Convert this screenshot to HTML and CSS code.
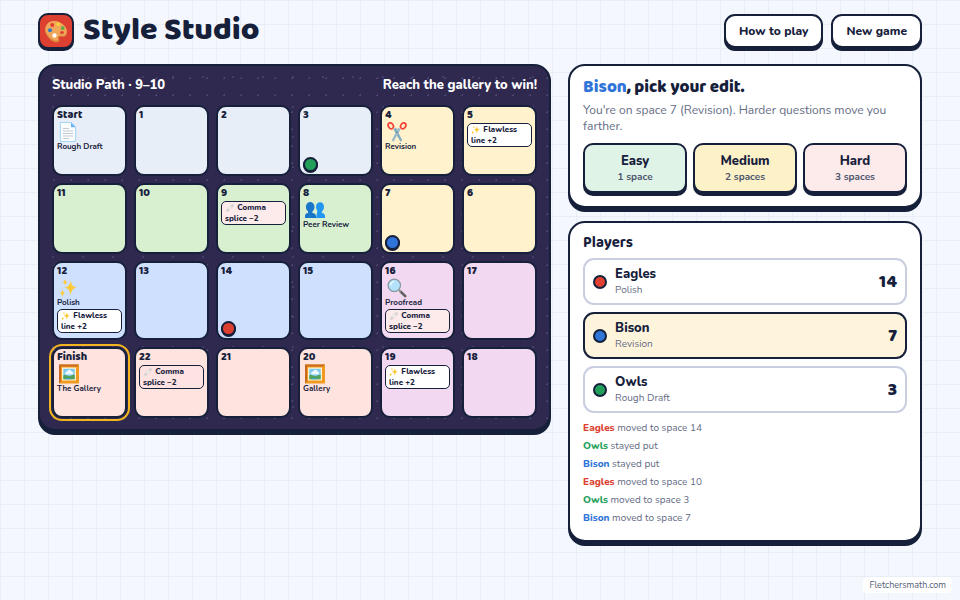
FILE: index.html
```html
<!DOCTYPE html>
<html lang="en">
<head>
<meta charset="utf-8">
<meta name="viewport" content="width=device-width, initial-scale=1">
<title>Style Studio</title>
<link rel="stylesheet" href="styles.css">
</head>
<body>
<svg class="sprite" aria-hidden="true">
  <symbol id="palette" viewBox="0 0 32 32">
    <path fill="#d98b3f" d="M4 8C9 0 22 2 28 10c4 6 3 11 0 13-3 2-6-1-8 1s2 4 0 6c-4 3-12-1-16-8C0 17 1 12 4 8z"/>
    <path fill="#f2a65a" d="M4 7C9 0 22 2 28 10c4 6 2 10-1 12-3 1-6-1-8 1s2 4-1 5c-4 2-10-2-14-8C1 15 1 11 4 7z"/>
    <ellipse cx="24" cy="18" rx="2.6" ry="2" fill="#dd4030"/>
    <circle cx="11" cy="8" r="2.6" fill="#e23b32"/>
    <circle cx="19" cy="7" r="2.6" fill="#f4d03c"/>
    <circle cx="25" cy="12" r="2.5" fill="#5fa845"/>
    <circle cx="8" cy="15" r="2.7" fill="#3279c8"/>
    <circle cx="14" cy="22" r="2.9" fill="#fff"/>
  </symbol>
  <symbol id="page" viewBox="0 0 20 20">
    <path fill="#fafcfe" stroke="#90caf5" stroke-width=".8" d="M1.400 .5h10.800l4.400 4.600v14.400H1.400z"/>
    <path fill="#64b5f6" d="M12 .5l4.600 4.800H12z"/>
    <path stroke="#b5bec6" stroke-width=".8" d="M4 6.500h6M4 9h10M4 11.500h10M4 14h10M4 16.500h6"/>
  </symbol>
  <symbol id="scissors" viewBox="0 0 20 20">
    <path fill="#82aec0" d="M6.200 7L9 5.800l6.200 12.400-1.700 1.600z"/>
    <path fill="#9dbccb" d="M13.800 7L11 5.800 4.800 18.200l1.700 1.600z"/>
    <circle cx="10" cy="10.200" r=".8" fill="#546e7a"/>
    <g fill="none" stroke="#f44336" stroke-width="1.700">
      <ellipse cx="3.800" cy="3.800" rx="2.400" ry="3.100" transform="rotate(-35 3.800 3.800)"/>
      <ellipse cx="16.200" cy="3.800" rx="2.400" ry="3.100" transform="rotate(35 16.200 3.800)"/>
    </g>
  </symbol>
  <symbol id="people" viewBox="0 0 20 20">
    <g fill="#2196f3"><ellipse cx="15" cy="7" rx="4" ry="4.800"/><path d="M12.600 10h4.200v3c2 .3 3.200 1.300 3.200 3V18h-9z"/></g>
    <g fill="#1976c9"><ellipse cx="5.200" cy="7" rx="4.300" ry="5"/><path d="M3 10h4.400v3c2.200.3 3.600 1.300 3.600 3V18H0v-2c0-1.700 1-2.700 3-3z"/></g>
  </symbol>
  <symbol id="sparkles" viewBox="0 0 20 20">
    <g fill="#fdca37">
      <path d="M11.600 2c.6 4.800 2 6.600 6.200 7.600-4.200 1.200-5.600 3-6.200 8.200-.6-5.200-2-7-6-8.200 4-1 5.400-2.800 6-7.600z"/>
      <path d="M6 .8c.3 2.100.8 2.900 2.700 3.400-1.900.5-2.400 1.400-2.700 3.500-.3-2.100-.8-3-2.600-3.500C5.200 3.700 5.700 2.900 6 .8z"/>
      <path d="M3.400 11.200c.3 2.500 1 3.300 3 3.900-2 .6-2.700 1.500-3 4-.3-2.500-1-3.400-2.900-4 1.900-.6 2.600-1.400 2.900-3.900z"/>
    </g>
  </symbol>
  <symbol id="magnifier" viewBox="0 0 20 20">
    <path stroke="#616161" stroke-width="2.600" stroke-linecap="round" d="M13.400 13.400l4.800 4.800"/>
    <path stroke="#9e9e9e" stroke-width="1.500" d="M11.600 11.600l2.200 2.200"/>
    <circle cx="7.300" cy="7.300" r="6.200" fill="#b5e2fb" stroke="#8b9ba5" stroke-width="1.300"/>
    <path fill="none" stroke="#effaff" stroke-width="1.400" stroke-linecap="round" d="M3.700 6.500c.4-1.400 1.400-2.500 2.800-2.900"/>
  </symbol>
  <symbol id="picture" viewBox="0 0 20 20">
    <path fill="#f29a1f" d="M0 .5h20v19H0z"/>
    <path fill="#c9691f" d="M0 .5h20l-2 2H2v15l-2 2z"/>
    <path fill="#fff3d0" d="M3 3.500h14v13H3z"/>
    <path fill="#7cc8ee" d="M4.300 4.800h11.400v10.400H4.300z"/>
    <path fill="#eef8fd" d="M6 9.500a2 2 0 0 1 2-2 2.500 2.500 0 0 1 4.700 0 1.700 1.700 0 0 1 1 3H6.600z"/>
    <path fill="#53a05b" d="M4.300 11.500c3-1.500 4 .8 6 .8s3-2 5.400-1.300v4.200H4.300z"/>
    <path fill="#39a5cf" d="M6.500 15.200c1-2 4-1.300 6 0z"/>
  </symbol>
  <symbol id="bandage" viewBox="0 0 20 20">
    <path stroke="#d9d5d3" stroke-width="6" stroke-linecap="round" d="M5 15L15 5"/>
    <path stroke="#f3f0ee" stroke-width="4.500" d="M8 12l4-4"/>
  </symbol>
</svg>

<div class="app">
  <header class="topbar">
    <div class="brand">
      <span class="logo"><svg aria-hidden="true"><use href="#palette"/></svg></span>
      <h1>Style Studio</h1>
    </div>
    <nav class="actions">
      <button type="button" class="btn">How to play</button>
      <button type="button" class="btn">New game</button>
    </nav>
  </header>

  <main class="layout">
    <section class="board">
      <div class="board-head"><span>Studio Path · 9–10</span><span>Reach the gallery to win!</span></div>
      <ol class="grid">
        <li class="cell draft"><b>Start</b><svg class="icon" aria-hidden="true"><use href="#page"/></svg><span class="stage">Rough Draft</span></li>
        <li class="cell draft"><b>1</b></li>
        <li class="cell draft"><b>2</b></li>
        <li class="cell draft"><b>3</b><i class="token green"></i></li>
        <li class="cell revision"><b>4</b><svg class="icon" aria-hidden="true"><use href="#scissors"/></svg><span class="stage">Revision</span></li>
        <li class="cell revision"><b>5</b><span class="tag"><svg aria-hidden="true"><use href="#sparkles"/></svg> Flawless line +2</span></li>

        <li class="cell peer"><b>11</b></li>
        <li class="cell peer"><b>10</b></li>
        <li class="cell peer"><b>9</b><span class="tag bad"><svg aria-hidden="true"><use href="#bandage"/></svg> Comma splice −2</span></li>
        <li class="cell peer"><b>8</b><svg class="icon" aria-hidden="true"><use href="#people"/></svg><span class="stage">Peer Review</span></li>
        <li class="cell revision"><b>7</b><i class="token blue"></i></li>
        <li class="cell revision"><b>6</b></li>

        <li class="cell polish"><b>12</b><svg class="icon" aria-hidden="true"><use href="#sparkles"/></svg><span class="stage">Polish</span><span class="tag"><svg aria-hidden="true"><use href="#sparkles"/></svg> Flawless line +2</span></li>
        <li class="cell polish"><b>13</b></li>
        <li class="cell polish"><b>14</b><i class="token red"></i></li>
        <li class="cell polish"><b>15</b></li>
        <li class="cell proof"><b>16</b><svg class="icon" aria-hidden="true"><use href="#magnifier"/></svg><span class="stage">Proofread</span><span class="tag bad"><svg aria-hidden="true"><use href="#bandage"/></svg> Comma splice −2</span></li>
        <li class="cell proof"><b>17</b></li>

        <li class="cell gallery finish"><b>Finish</b><svg class="icon" aria-hidden="true"><use href="#picture"/></svg><span class="stage">The Gallery</span></li>
        <li class="cell gallery"><b>22</b><span class="tag bad"><svg aria-hidden="true"><use href="#bandage"/></svg> Comma splice −2</span></li>
        <li class="cell gallery"><b>21</b></li>
        <li class="cell gallery"><b>20</b><svg class="icon" aria-hidden="true"><use href="#picture"/></svg><span class="stage">Gallery</span></li>
        <li class="cell proof"><b>19</b><span class="tag"><svg aria-hidden="true"><use href="#sparkles"/></svg> Flawless line +2</span></li>
        <li class="cell proof"><b>18</b></li>
      </ol>
    </section>

    <aside class="side">
      <section class="panel">
        <h2><span class="name-blue">Bison</span>, pick your edit.</h2>
        <p class="hint">You're on space 7 (Revision). Harder questions move you farther.</p>
        <div class="choices">
          <button type="button" class="choice easy">Easy<small>1 space</small></button>
          <button type="button" class="choice medium">Medium<small>2 spaces</small></button>
          <button type="button" class="choice hard">Hard<small>3 spaces</small></button>
        </div>
      </section>

      <section class="panel">
        <h3>Players</h3>
        <ul class="players">
          <li class="player"><i class="dot red"></i><div class="who"><strong>Eagles</strong><span>Polish</span></div><b class="score">14</b></li>
          <li class="player active"><i class="dot blue"></i><div class="who"><strong>Bison</strong><span>Revision</span></div><b class="score">7</b></li>
          <li class="player"><i class="dot green"></i><div class="who"><strong>Owls</strong><span>Rough Draft</span></div><b class="score">3</b></li>
        </ul>
        <ul class="log">
          <li><b class="name-red">Eagles</b> moved to space 14</li>
          <li><b class="name-green">Owls</b> stayed put</li>
          <li><b class="name-blue">Bison</b> stayed put</li>
          <li><b class="name-red">Eagles</b> moved to space 10</li>
          <li><b class="name-green">Owls</b> moved to space 3</li>
          <li><b class="name-blue">Bison</b> moved to space 7</li>
        </ul>
      </section>
    </aside>
  </main>
</div>
<footer class="credit">Fletchersmath.com</footer>
</body>
</html>
```
FILE: styles.css
```css
:root {
  --ink: #16203b;
  --muted: #646c84;
  --red: #dd4030;
  --blue: #2f74d8;
  --green: #22a05a;
}

* { box-sizing: border-box; }

body {
  margin: 0;
  min-height: 100vh;
  color: var(--ink);
  font-family: "Nunito", "Open Sans", sans-serif;
  font-size: 12px;
  line-height: 16px;
  background-color: #f4f8fe;
  background-image:
    linear-gradient(#e9eef6 1px, transparent 1px),
    linear-gradient(90deg, #e9eef6 1px, transparent 1px);
  background-size: 24px 24px;
}

h1, h2, h3, p, ol, ul { margin: 0; padding: 0; }
ol, ul { list-style: none; }
button { color: inherit; font: inherit; cursor: pointer; }

.sprite { position: absolute; width: 0; height: 0; }

.app { padding: 12px 38px 24px; }

.topbar, .brand, .actions, .board-head { display: flex; align-items: center; }
.topbar, .board-head { justify-content: space-between; }

.topbar { height: 38px; margin-bottom: 14px; }
.brand { gap: 9px; }
.actions { gap: 8px; }

.logo {
  display: grid;
  place-items: center;
  width: 36px;
  height: 36px;
  border: 2px solid var(--ink);
  border-radius: 10px;
  background: var(--red);
  box-shadow: 0 2px 0 var(--ink);
}
.logo svg { width: 24px; height: 24px; }

h1 { font-family: "Baloo 2", "Noto Sans", sans-serif; font-size: 32px; font-weight: 800; line-height: 34px; }

.btn {
  height: 34px;
  padding: 0 13px;
  border: 2px solid var(--ink);
  border-radius: 11px;
  background: #fff;
  box-shadow: 0 3px 0 var(--ink);
  font-weight: 800;
}

.layout { display: grid; grid-template-columns: 145fr 100fr; gap: 17px; align-items: start; }

.board, .panel {
  border: 2px solid var(--ink);
  border-radius: 17px;
  box-shadow: 0 4px 0 var(--ink);
}

.board {
  padding: 11px 12px;
  background-color: #2f2950;
  background-image:
    radial-gradient(circle, #4d4770 1px, transparent 1px),
    radial-gradient(circle, #433d68 1px, transparent 1px);
  background-size: 17px 17px, 30px 30px;
  background-position: 6px 4px, 28px 26px;
}
.board-head { padding-bottom: 12px; color: #fff; font-size: 13px; font-weight: 800; }

.grid { display: grid; grid-template-columns: repeat(6, 1fr); gap: 7px; }

.cell {
  position: relative;
  display: flex;
  flex-direction: column;
  min-width: 0;
  min-height: 71px;
  padding: 3px 3px 5px;
  border: 2px solid var(--ink);
  border-radius: 10px;
}
.cell > b { font-family: "Baloo 2", "Noto Sans", sans-serif; font-size: 11px; font-weight: 800; line-height: 11px; margin-bottom: 1px; }
.icon { flex: none; width: 20px; height: 20px; margin-left: 2px; }
.stage { font-size: 8px; font-weight: 700; line-height: 9px; white-space: nowrap; }
.stage + .tag { margin-top: 2px; }

.draft { background: #e8eef8; }
.revision { background: #fff2cc; }
.peer { background: #d8efd0; }
.polish { background: #cfe0ff; }
.proof { background: #f2d8f0; }
.gallery { background: #fee3de; }
.finish { outline: 2px solid #f3b61f; outline-offset: 1px; }

.tag {
  margin-top: 1px;
  padding: 0 3px;
  border: 1px solid var(--ink);
  border-radius: 5px;
  background: #fff;
  font-size: 8px;
  font-weight: 800;
  line-height: 11px;
}
.tag svg { width: 10px; height: 10px; vertical-align: middle; }
.bad { background: #fdeaea; }
.gallery .bad { background: #fee3e2; }

.token, .dot { border: 2px solid var(--ink); border-radius: 50%; }
.token { position: absolute; left: 3px; bottom: 2px; width: 15px; height: 15px; box-shadow: 0 1px 0 var(--ink); }
.dot { flex: none; width: 14px; height: 14px; }
.red { background: var(--red); }
.blue { background: var(--blue); }
.green { background: var(--green); }
.name-red { color: var(--red); }
.name-blue { color: var(--blue); }
.name-green { color: var(--green); }

.side { display: grid; gap: 13px; }
.panel { padding: 13px; background: #fff; }

h2 { margin-bottom: 5px; font-family: "Baloo 2", "Noto Sans", sans-serif; font-size: 17px; font-weight: 800; line-height: 18px; }
h3 { margin-bottom: 7px; font-family: "Baloo 2", "Noto Sans", sans-serif; font-size: 15px; font-weight: 700; line-height: 15px; }
.hint { margin-bottom: 9px; color: var(--muted); font-size: 12px; }

.choices { display: grid; grid-template-columns: repeat(3, 1fr); gap: 6px; }
.choice {
  height: 50px;
  padding: 2px 0 0;
  border: 2px solid var(--ink);
  border-radius: 10px;
  box-shadow: 0 3px 0 var(--ink);
  font-size: 13px;
  font-weight: 800;
}
.choice small { display: block; color: #4b556d; font-size: 10px; font-weight: 700; }
.easy { background: #e0f3e7; }
.medium { background: #fdf1c8; }
.hard { background: #fdeaea; }

.players { display: grid; gap: 7px; }
.player {
  display: flex;
  align-items: center;
  gap: 8px;
  min-height: 47px;
  padding: 0 8px;
  border: 2px solid #c9cee0;
  border-radius: 11px;
}
.active { border-color: var(--ink); background: #fef4dc; }
.who { flex: 1; }
.who strong, .who span { display: block; }
.who strong { font-size: 13px; font-weight: 800; line-height: 16px; }
.who span { color: var(--muted); font-size: 10px; }
.score { font-family: "Baloo 2", "Noto Sans", sans-serif; font-size: 18px; font-weight: 800; }

.log { margin-top: 6px; color: var(--muted); font-size: 10px; line-height: 18px; }
.log b { font-weight: 800; }

.credit {
  position: fixed;
  right: 8px;
  bottom: 7px;
  padding: 0 6px;
  border-radius: 4px;
  background: #fff;
  color: #555e76;
  font-size: 9px;
}
```
